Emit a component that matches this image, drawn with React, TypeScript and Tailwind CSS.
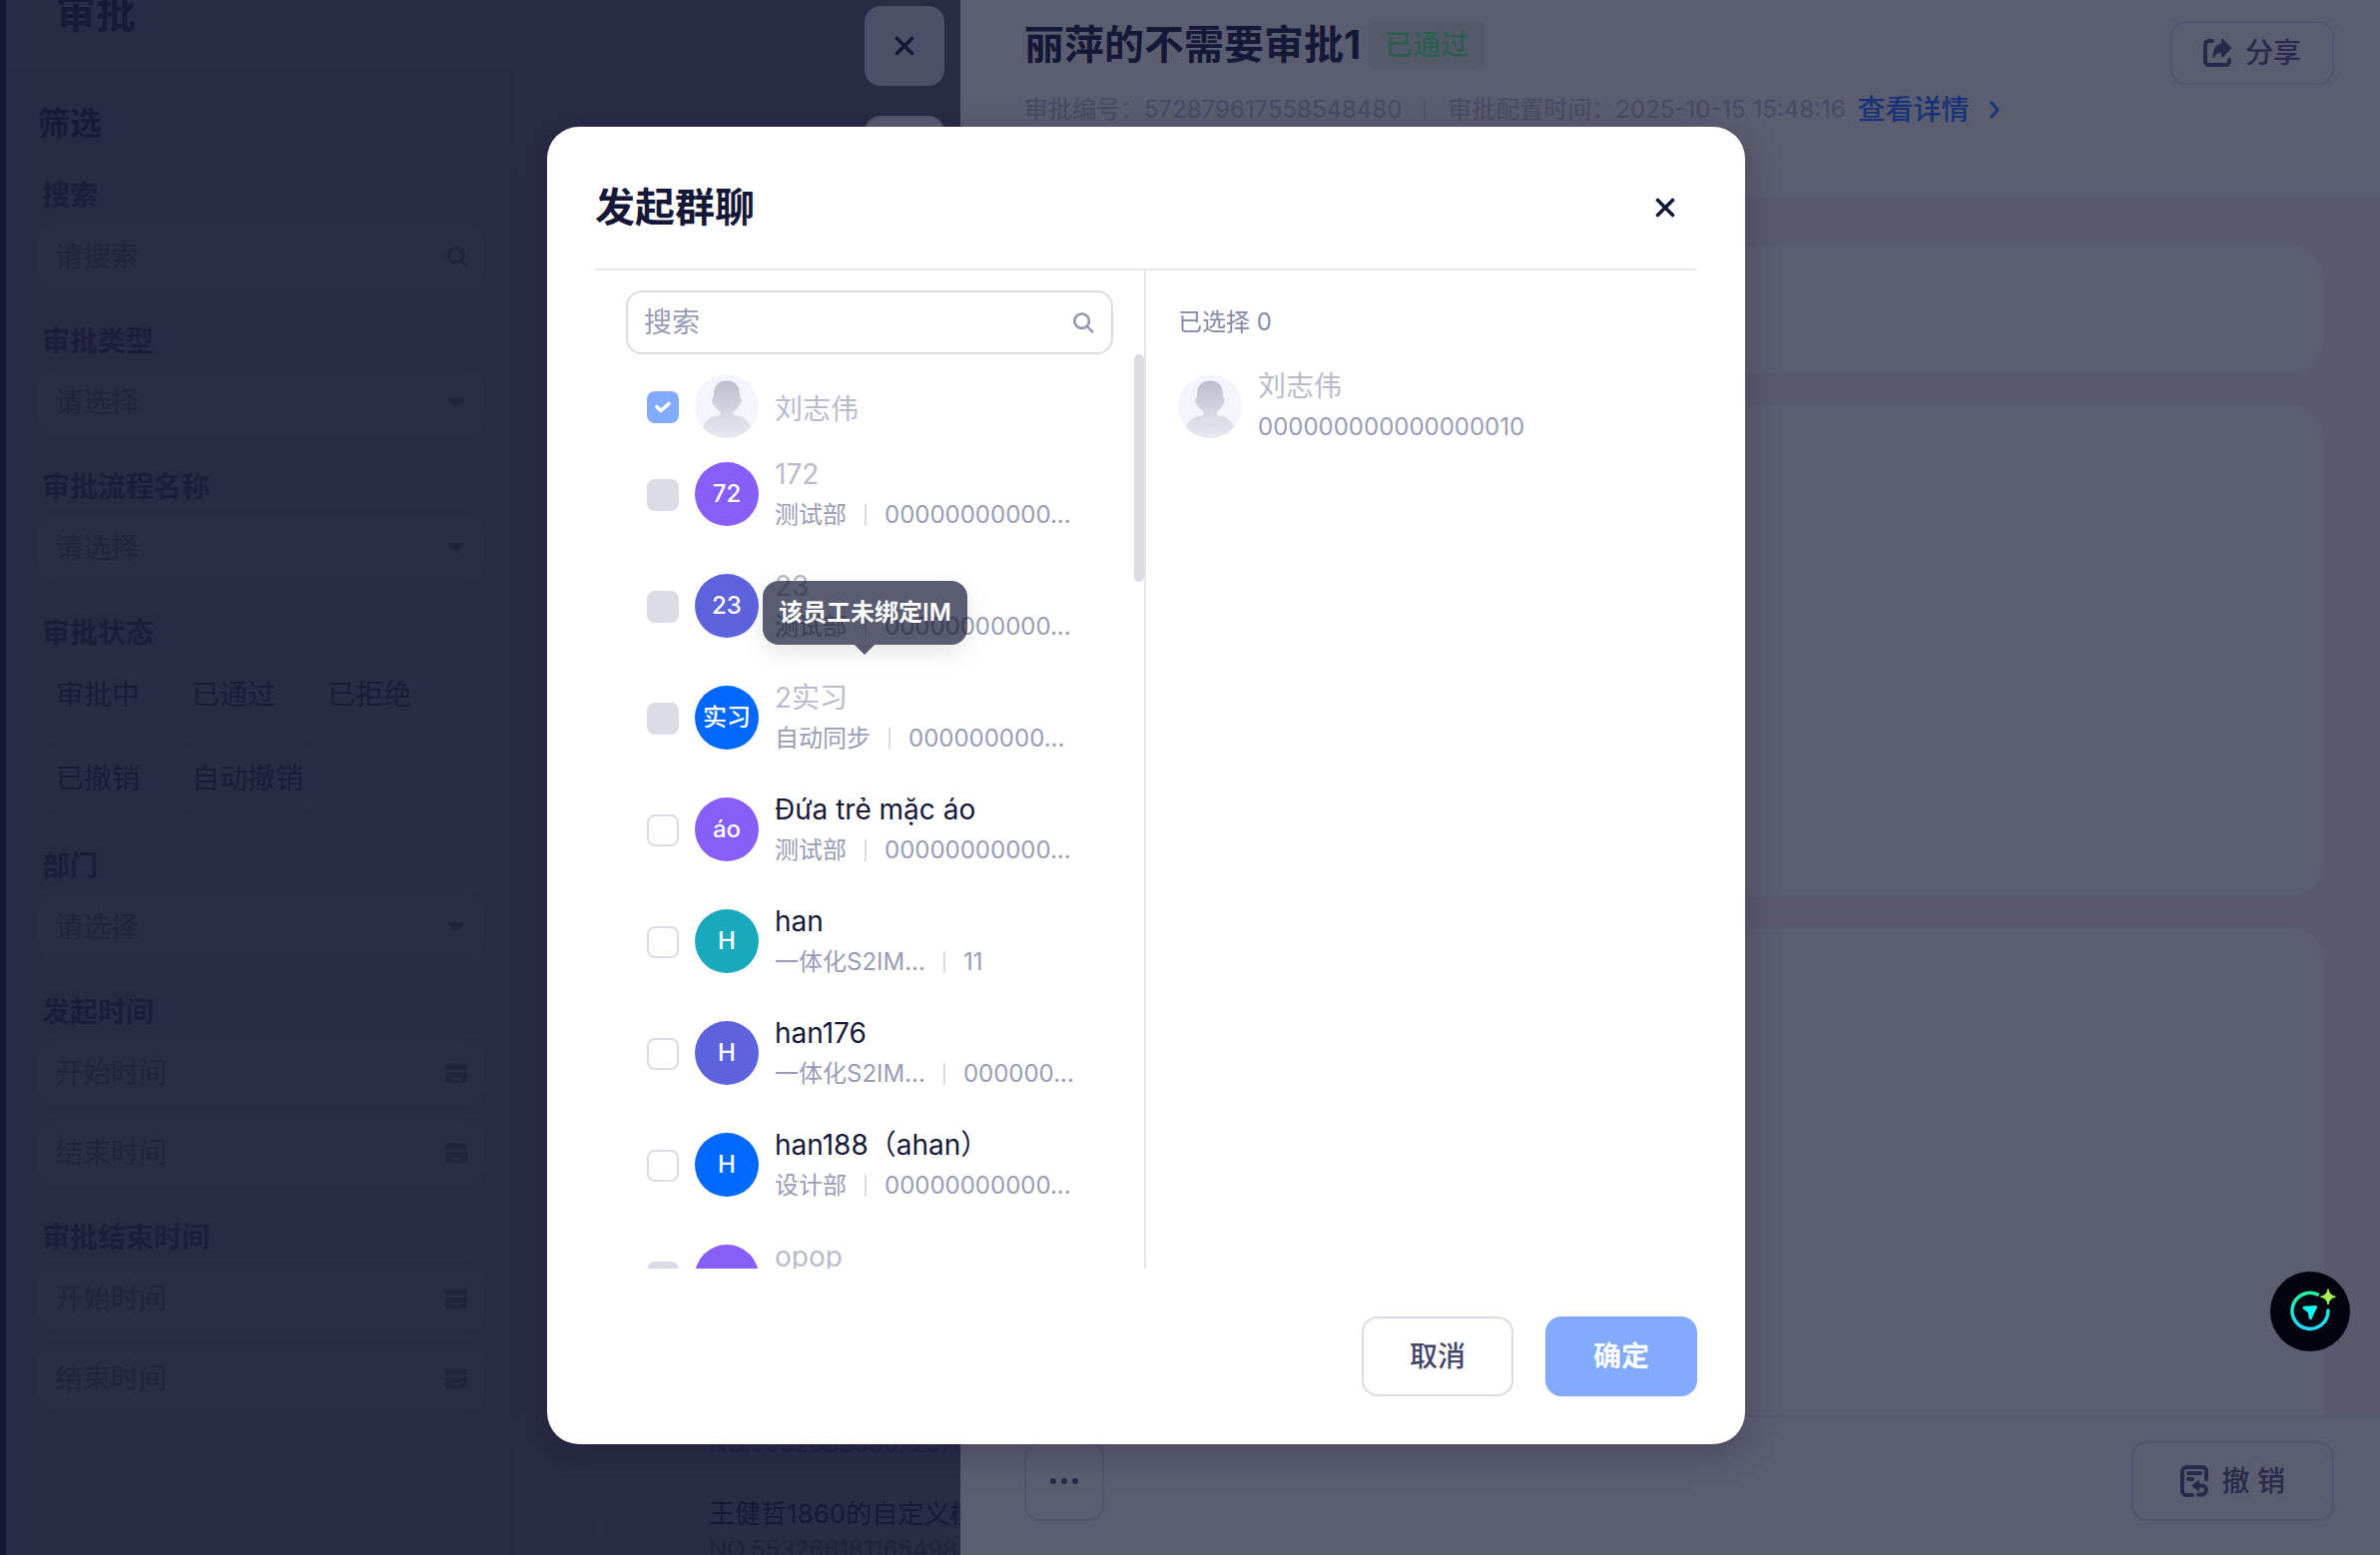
import React from "react";

type IconProps = { className?: string };

function SearchIcon({ className }: IconProps) {
  return (
    <svg viewBox="0 0 24 24" fill="none" stroke="currentColor" strokeWidth="3" strokeLinecap="round" className={className} aria-hidden="true">
      <circle cx="10.5" cy="10.5" r="8" />
      <path d="M16.5 16.5 22 22" />
    </svg>
  );
}

function CaretIcon({ className }: IconProps) {
  return (
    <svg viewBox="0 0 20 12" fill="currentColor" className={className} aria-hidden="true">
      <path d="M3 1h14c1.600 0 2.300 1.700 1.200 2.800l-6.400 6.200c-1 1-2.600 1-3.600 0L1.800 3.800C.7 2.700 1.400 1 3 1Z" />
    </svg>
  );
}

function CalendarIcon({ className }: IconProps) {
  return (
    <svg viewBox="0 0 24 24" fill="currentColor" className={className} aria-hidden="true">
      <path d="M3 3h3.500c.6 0 .8-1 1.700-1s1.100 1 1.700 1h4.200c.6 0 .8-1 1.700-1s1.100 1 1.700 1H21a2 2 0 0 1 2 2v4H1V5a2 2 0 0 1 2-2Z" />
      <path fillRule="evenodd" d="M1 11h22v9a2 2 0 0 1-2 2H3a2 2 0 0 1-2-2v-9Zm7 6a1.300 1.300 0 0 0 0 2.600h8A1.300 1.300 0 0 0 16 17H8Z" />
    </svg>
  );
}

function CloseIcon({ className }: IconProps) {
  return (
    <svg viewBox="0 0 20 20" fill="none" stroke="currentColor" strokeWidth="3.600" strokeLinecap="round" className={className} aria-hidden="true">
      <path d="M2.500 2.500 17.500 17.500M17.500 2.500 2.500 17.500" />
    </svg>
  );
}

function ShareIcon({ className }: IconProps) {
  return (
    <svg viewBox="0 0 28 28" className={className} aria-hidden="true">
      <path d="M9 2H5.500A3.500 3.500 0 0 0 2 5.500v17A3.500 3.500 0 0 0 5.500 26h17a3.500 3.500 0 0 0 3.500-3.500V21" fill="none" stroke="currentColor" strokeWidth="4" strokeLinecap="round" />
      <path d="M18 1.200c0-1 1.200-1.500 1.900-.8l7.500 7.600c.7.700.7 1.700 0 2.400L19.900 18c-.7.700-1.900.2-1.900-.8v-3.400c-3.800.1-6 2-7.200 4.900-.3.700-1.300.6-1.300-.2C9.600 11 12.500 5.500 18 4.600V1.200Z" fill="currentColor" />
    </svg>
  );
}

function RevokeIcon({ className }: IconProps) {
  return (
    <svg viewBox="0 0 28 32" className={className} aria-hidden="true">
      <g fill="none" stroke="currentColor" strokeWidth="4" strokeLinecap="round">
        <path d="M26 14V6a4 4 0 0 0-4-4H6a4 4 0 0 0-4 4v20a4 4 0 0 0 4 4h6" />
        <path d="M8 8h12M8 14h4" />
        <path d="M17 20.500h4.500a4.500 4.500 0 0 1 0 9H18" />
      </g>
      <path d="M18.500 15.500v10.200L12.800 21.500a1.200 1.200 0 0 1 0-1.900Z" fill="currentColor" stroke="currentColor" strokeLinejoin="round" />
    </svg>
  );
}

function Person({ id }: { id: string }) {
  return (
    <svg viewBox="0 0 64 64" className="size-16 shrink-0" aria-hidden="true">
      <defs>
        <linearGradient id={id} x1="0" y1="0" x2="0" y2="1">
          <stop offset="0" stopColor="#bcbecd" />
          <stop offset="1" stopColor="#e8eaf2" />
        </linearGradient>
        <clipPath id={id + "-clip"}>
          <circle cx="32" cy="32" r="32" />
        </clipPath>
      </defs>
      <circle cx="32" cy="32" r="32" fill="#f4f5fc" />
      <path
        clipPath={`url(#${id}-clip)`}
        fill={`url(#${id})`}
        d="M19 20C19 11 24 6.500 32 6.500S45 11 45 20v3c2.500 0 2 8-1 8.500C43 35 39 37 38.500 39c0 2.500 2 2.500 5.500 3 6 1 11 6 12 12L50 64H14L8 54c1-6 6-11 12-12 3.500-.5 6-.5 6-3-.5-2-5-4-6-7.500-3-.5-3.500-8.500-1-8.500v-3Z"
      />
    </svg>
  );
}

const fieldBox =
  "flex h-16 items-center gap-3 rounded-2xl border-2 border-[#2c2c47] bg-[#292d47] px-[15px] text-[#21233f]";
const fieldText =
  "min-w-0 flex-1 appearance-none bg-transparent text-[28px] leading-10 text-[#21233f] outline-none placeholder:text-[#21233f]";

function FieldLabel({ htmlFor, children }: { htmlFor: string; children: React.ReactNode }) {
  return (
    <label htmlFor={htmlFor} className="mb-2 block pl-1 text-[28px] font-bold leading-[42px] text-[#1b1d3b]">
      {children}
    </label>
  );
}

function SelectField({ id, label }: { id: string; label: string }) {
  return (
    <div className="mb-8">
      <FieldLabel htmlFor={id}>{label}</FieldLabel>
      <div className={fieldBox}>
        <select id={id} className={fieldText}>
          <option>请选择</option>
        </select>
        <CaretIcon className="mr-[3px] h-3 w-[18px]" />
      </div>
    </div>
  );
}

function DateRange({ id, label }: { id: string; label: string }) {
  return (
    <div className="mb-8">
      <FieldLabel htmlFor={id}>{label}</FieldLabel>
      <div className="flex flex-col gap-4">
        {["开始时间", "结束时间"].map((text, i) => (
          <div key={text} className={fieldBox}>
            <input id={i === 0 ? id : id + "-end"} aria-label={label + text} placeholder={text} className={fieldText} />
            <CalendarIcon className="size-6" />
          </div>
        ))}
      </div>
    </div>
  );
}

function FilterPanel() {
  return (
    <aside className="w-[510px] shrink-0 bg-[#282b45] pl-8 pr-[30px] pt-8">
      <h2 className="mb-[29px] text-[32px] font-bold leading-[44px] text-[#181a39]">筛选</h2>
      <div className="mb-8">
        <FieldLabel htmlFor="filter-search">搜索</FieldLabel>
        <div className={fieldBox}>
          <input id="filter-search" placeholder="请搜索" className={fieldText} />
          <SearchIcon className="size-[22px]" />
        </div>
      </div>
      <SelectField id="filter-type" label="审批类型" />
      <SelectField id="filter-flow" label="审批流程名称" />
      <div className="mb-[34px]">
        <p className="mb-2 pl-1 text-[28px] font-bold leading-[42px] text-[#1b1d3b]">审批状态</p>
        <div className="flex flex-wrap gap-x-4 gap-y-[18px]">
          {["审批中", "已通过", "已拒绝", "已撤销", "自动撤销"].map((s) => (
            <button key={s} className="h-[66px] rounded-2xl bg-[#292c46] px-[18px] text-[28px] leading-10 text-[#191b39]">
              {s}
            </button>
          ))}
        </div>
      </div>
      <SelectField id="filter-dept" label="部门" />
      <DateRange id="filter-start" label="发起时间" />
      <DateRange id="filter-finish" label="审批结束时间" />
    </aside>
  );
}

function ApprovalRow({ title, no }: { title: string; no: string }) {
  return (
    <li className="flex items-center whitespace-nowrap border-b-2 border-[#262943] py-4 pl-[33px]">
      <input type="checkbox" aria-label={title} className="mr-[78px] size-8 shrink-0 appearance-none rounded-lg border-2 border-[#2e2c47]" />
      <div>
        <p className="text-[26px] leading-[42px] text-[#161837]">{title}</p>
        <p className="text-[24px] leading-[30px] text-[#20223e]">{no}</p>
      </div>
    </li>
  );
}

function Backdrop() {
  return (
    <div className="relative flex w-[956px] shrink-0 flex-col overflow-hidden bg-[#292c46]">
      <header className="h-[70px] shrink-0 border-b-2 border-[#272a44] pl-[50px]">
        <h1 className="-mt-4 text-[40px] font-bold leading-[60px] text-[#181a39]">审批</h1>
      </header>
      <div className="flex min-h-0 flex-1">
        <FilterPanel />
        <ul className="-mb-7 ml-[51px] flex min-w-0 flex-1 flex-col justify-end">
          <ApprovalRow title="王健哲1860的自定义模板" no="NO.553268353072578560" />
          <ApprovalRow title="王健哲1860的自定义模板" no="NO.553266181165498368" />
        </ul>
      </div>
      <div className="absolute right-4 top-1.5 flex flex-col gap-[30px]">
        <button aria-label="关闭" className="grid size-20 place-items-center rounded-2xl bg-[#4c5068] text-[#161837]">
          <CloseIcon className="size-5" />
        </button>
        <button aria-label="更多操作" className="size-20 rounded-2xl border-2 border-[#52546b] bg-[#5b5d70]" />
      </div>
    </div>
  );
}

function Drawer() {
  return (
    <main className="flex min-w-0 flex-1 flex-col bg-[#5b5d70]">
      <header className="flex h-[197px] shrink-0 justify-between pl-16 pr-[46px]">
        <div>
          <div className="mt-[17px] flex items-center gap-2">
            <h2 className="text-[40px] font-bold leading-[56px] text-[#161837]">丽萍的不需要审批1</h2>
            <span className="flex h-12 items-center rounded-lg bg-[#545a69] px-4 text-[28px] font-medium leading-10 text-[#2a5f50]">已通过</span>
          </div>
          <p className="mt-[17px] flex items-center whitespace-nowrap text-[24px] leading-10 text-[#484a66]">
            <span>审批编号：572879617558548480</span>
            <span className="mx-[22px] h-5 w-0.5 bg-[#505268]" />
            <span>审批配置时间：2025-10-15 15:48:16</span>
            <a href="#detail" className="ml-3 flex items-center gap-5 text-[28px] font-medium text-[#183378]">
              查看详情
              <svg viewBox="0 0 10 18" fill="none" stroke="currentColor" strokeWidth="3" strokeLinecap="round" strokeLinejoin="round" className="h-[18px] w-2.5" aria-hidden="true">
                <path d="M2 2l6 7-6 7" />
              </svg>
            </a>
          </p>
        </div>
        <button className="mt-[21px] flex h-16 items-center gap-3.5 self-start rounded-2xl border-2 border-[#535570] px-[31px] text-[28px] font-medium leading-10 text-[#272a49]">
          <ShareIcon className="size-7" />
          分享
        </button>
      </header>
      <div className="flex min-h-0 flex-1 flex-col gap-8 overflow-hidden bg-[#58596f] pl-16 pr-14 pt-[49px]">
        <section className="h-32 shrink-0 rounded-[32px] bg-[#5b5d70]" />
        <section className="h-[492px] shrink-0 rounded-[32px] bg-[#5b5d70]" />
        <section className="flex-1 rounded-t-[32px] bg-[#5b5d70]" />
      </div>
      <footer className="flex h-[140px] shrink-0 items-start justify-between border-t-2 border-[#57596f] pl-16 pr-[46px] pt-6">
        <button aria-label="更多" className="flex size-20 items-center justify-center gap-[5px] rounded-2xl border-2 border-[#52546f]">
          <span className="size-1.5 rounded-full bg-[#272a49]" />
          <span className="size-1.5 rounded-full bg-[#272a49]" />
          <span className="size-1.5 rounded-full bg-[#272a49]" />
        </button>
        <button className="flex h-20 items-center gap-3.5 rounded-2xl border-2 border-[#52546f] px-[47px] text-[28px] font-medium leading-10 text-[#272a49]">
          <RevokeIcon className="h-8 w-7" />
          撤 销
        </button>
      </footer>
    </main>
  );
}

type Member = {
  name: string;
  avatar: string;
  color: string;
  dept: string;
  no: string;
  disabled?: boolean;
  tip?: string;
};

const members: Member[] = [
  { name: "172", avatar: "72", color: "bg-[#875ff8]", dept: "测试部", no: "00000000000...", disabled: true },
  { name: "23", avatar: "23", color: "bg-[#5d63dc]", dept: "测试部", no: "00000000000...", disabled: true },
  { name: "2实习", avatar: "实习", color: "bg-[#0068ff]", dept: "自动同步", no: "000000000...", disabled: true, tip: "该员工未绑定IM" },
  { name: "Đứa trẻ mặc áo", avatar: "áo", color: "bg-[#875ff8]", dept: "测试部", no: "00000000000..." },
  { name: "han", avatar: "H", color: "bg-[#18a9bd]", dept: "一体化S2IM...", no: "11" },
  { name: "han176", avatar: "H", color: "bg-[#5d63dc]", dept: "一体化S2IM...", no: "000000..." },
  { name: "han188（ahan）", avatar: "H", color: "bg-[#0068ff]", dept: "设计部", no: "00000000000..." },
  { name: "opop", avatar: "op", color: "bg-[#875ff8]", dept: "测试部", no: "00000000000...", disabled: true },
];

function MemberRow({ m, index }: { m: Member; index: number }) {
  const id = "member-" + index;
  return (
    <li className="mb-8 flex h-20 shrink-0 items-center gap-4 whitespace-nowrap">
      <input
        id={id}
        type="checkbox"
        disabled={m.disabled}
        className="mt-0.5 size-8 shrink-0 appearance-none rounded-lg border-2 border-[#d9dbe6] bg-white disabled:bg-[#d9dbe5]"
      />
      <span className={"grid size-16 shrink-0 place-items-center rounded-full text-[24px] font-medium leading-8 text-white " + m.color}>{m.avatar}</span>
      <div className="relative mt-0.5">
        <label htmlFor={id} className={"block text-[28px] leading-10 " + (m.disabled ? "text-[#b9bbcc]" : "text-[#161837]")}>
          {m.name}
        </label>
        <p className="flex items-center text-[24px] leading-[42px] text-[#989db5]">
          <span>{m.dept}</span>
          <span className="mx-[18px] h-[22px] w-0.5 bg-[#d9dbe5]" />
          <span>{m.no}</span>
        </p>
        {m.tip && (
          <div role="tooltip" className="absolute -left-3 bottom-[115px] flex h-16 items-center rounded-2xl bg-[#141735]/70 px-4 text-[24px] font-semibold leading-8 text-white shadow-[0_8px_24px_rgba(0,0,0,0.1)]">
            {m.tip}
            <svg viewBox="0 0 20 10" className="absolute left-1/2 top-full -ml-2.5 h-2.5 w-5" aria-hidden="true">
              <path d="M0 0h20L10 10Z" fill="#141735" fillOpacity="0.7" />
            </svg>
          </div>
        )}
      </div>
    </li>
  );
}

function GroupChatDialog() {
  return (
    <div role="dialog" aria-labelledby="dialog-title" className="flex w-[1200px] flex-col rounded-[32px] bg-white px-12 pb-12 shadow-[0_8px_32px_rgba(20,10,50,0.25)]">
      <header className="flex h-36 items-center justify-between border-b-2 border-[#e4e6f0] pt-5">
        <h2 id="dialog-title" className="text-[40px] font-bold leading-[56px] text-[#161837]">发起群聊</h2>
        <button aria-label="关闭" className="grid size-16 place-items-center text-[#161837]">
          <CloseIcon className="size-5" />
        </button>
      </header>
      <div className="flex h-[1000px]">
        <section className="relative flex w-[552px] shrink-0 flex-col border-r-2 border-[#e6e6ea] pl-[31px] pt-5">
          <div className="mr-[31px] flex h-16 shrink-0 items-center rounded-2xl border-2 border-[#d9dbe6] pl-4 pr-[17px] text-[#989db5]">
            <input aria-label="搜索" placeholder="搜索" className="min-w-0 flex-1 bg-transparent text-[28px] leading-10 outline-none placeholder:text-[#989db5]" />
            <SearchIcon className="size-[22px]" />
          </div>
          <ul className="flex min-h-0 flex-1 flex-col overflow-hidden pl-[21px] pt-5">
            <li className="mb-4 flex shrink-0 items-center gap-4">
              <span className="relative mt-0.5 grid size-8 shrink-0 place-items-center">
                <input id="member-self" type="checkbox" defaultChecked disabled className="size-8 appearance-none rounded-lg bg-[#82aaff]" />
                <svg viewBox="0 0 16 12" fill="none" stroke="#fff" strokeWidth="3.600" strokeLinecap="round" strokeLinejoin="round" className="absolute h-3 w-4" aria-hidden="true">
                  <path d="M2 5.500 6 9.500 14 2.500" />
                </svg>
              </span>
              <Person id="person-list" />
              <label htmlFor="member-self" className="pt-1.5 text-[28px] leading-10 text-[#b9bbcc]">刘志伟</label>
            </li>
            {members.map((m, i) => (
              <MemberRow key={m.name} m={m} index={i} />
            ))}
          </ul>
          <span className="absolute right-0 top-[84px] h-[228px] w-2.5 rounded-full bg-[#d9dbe5]" />
        </section>
        <section className="flex-1 pl-8 pt-8">
          <p className="text-[24px] leading-10 text-[#8688a8]">已选择 0</p>
          <div className="mt-[23px] flex items-center gap-4">
            <Person id="person-selected" />
            <div>
              <p className="text-[28px] leading-[42px] text-[#b9bbcc]">刘志伟</p>
              <p className="text-[24px] leading-10 text-[#989db5]">000000000000000010</p>
            </div>
          </div>
        </section>
      </div>
      <footer className="mt-12 flex justify-end gap-8">
        <button className="h-20 w-[152px] rounded-2xl border-2 border-[#d9dbe6] text-[28px] font-medium leading-10 text-[#43466a]">取消</button>
        <button className="h-20 w-[152px] rounded-2xl bg-[#82aaff] text-[28px] font-bold leading-10 text-white">确定</button>
      </footer>
    </div>
  );
}

function AssistantButton() {
  return (
    <button aria-label="智能助手" className="fixed right-[30px] top-[1274px] size-20 rounded-full bg-[#01040f]">
      <svg viewBox="0 0 80 80" className="size-20" aria-hidden="true">
        <defs>
          <linearGradient id="ring" x1="0" y1="0" x2="0" y2="1">
            <stop offset="0" stopColor="#22f09a" />
            <stop offset="1" stopColor="#1fd8ff" />
          </linearGradient>
        </defs>
        <path d="M47.500 23A18 18 0 1 0 58 39" fill="none" stroke="url(#ring)" strokeWidth="3.600" strokeLinecap="round" />
        <path d="M34 36.200 45.500 35.500 40.300 46.500 39.300 40.200Z" fill="#12f4f4" stroke="#12f4f4" strokeWidth="3" strokeLinejoin="round" />
        <path d="M58 17.500Q59.200 24 65.500 25.300Q59.200 26.600 58 33Q56.800 26.600 50.500 25.300Q56.800 24 58 17.500Z" fill="#a4f255" stroke="#a4f255" strokeLinejoin="round" />
      </svg>
    </button>
  );
}

export default function App() {
  return (
    <div className="relative h-screen overflow-hidden font-['Inter','Noto_Sans_CJK_SC',sans-serif]">
      <div className="flex h-full bg-[#141735] pl-1.5">
        <Backdrop />
        <Drawer />
      </div>
      <div className="absolute inset-0 flex items-start justify-center pr-[88px] pt-[127px]">
        <GroupChatDialog />
      </div>
      <AssistantButton />
    </div>
  );
}
